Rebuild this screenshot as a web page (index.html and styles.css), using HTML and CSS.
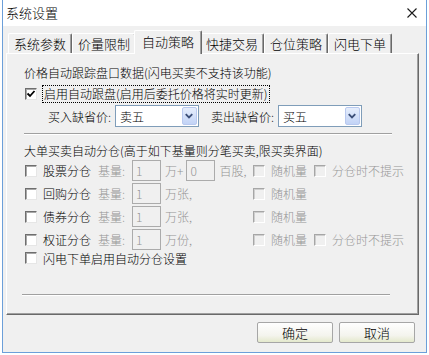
FILE: index.html
```html
<!DOCTYPE html>
<html lang="zh-CN">
<head>
    <meta charset="UTF-8">
    <title>系统设置</title>
    <link rel="stylesheet" href="styles.css">
</head>
<body>
    <div class="window">
        <div class="titlebar">
            <span class="title">系统设置</span>
            <svg class="close" width="10" height="10" viewBox="0 0 10 10">
                <path d="M0.5 0.5 L9.5 9.5 M9.5 0.5 L0.5 9.5" stroke="#1a1a1a" stroke-width="1.1" fill="none"/>
            </svg>
        </div>
        <div class="client">
            <div class="tabs">
                <div class="tab">系统参数</div>
                <div class="tab">价量限制</div>
                <div class="tab active">自动策略</div>
                <div class="tab">快捷交易</div>
                <div class="tab">仓位策略</div>
                <div class="tab">闪电下单</div>
            </div>
            <div class="panel">
                <div class="head">价格自动跟踪盘口数据(闪电买卖不支持该功能)</div>
                <div class="check-row">
                    <span class="cb">
                        <svg width="10" height="10" viewBox="0 0 10 10"><path d="M1.5 4.5 L4 7 L8.5 2" stroke="#000" stroke-width="1.8" fill="none"/></svg>
                    </span>
                    <span class="focus">启用自动跟盘(启用后委托价格将实时更新)</span>
                </div>
                <div class="price-row">
                    <span class="price-label">买入缺省价:</span>
                    <div class="combo">
                        <span class="combo-text">卖五</span>
                        <span class="combo-btn"><svg width="15" height="18" viewBox="0 0 15 18"><path d="M4 7 L7.5 10.5 L11 7" stroke="#3c4f78" stroke-width="2" fill="none"/></svg></span>
                    </div>
                    <span class="price-label sell">卖出缺省价:</span>
                    <div class="combo">
                        <span class="combo-text">买五</span>
                        <span class="combo-btn"><svg width="15" height="18" viewBox="0 0 15 18"><path d="M4 7 L7.5 10.5 L11 7" stroke="#3c4f78" stroke-width="2" fill="none"/></svg></span>
                    </div>
                </div>
                <div class="sep sep-top"></div>
                <div class="head head2">大单买卖自动分仓(高于如下基量则分笔买卖,限买卖界面)</div>

                <div class="split-row">
                    <span class="cb"></span><span class="split-name">股票分仓</span>
                    <span class="dim base">基量:</span><span class="field">1</span>
                    <span class="unit"><span class="dim">万+</span><span class="field mid">0</span><span class="dim">百股,</span></span>
                    <span class="cb dis"></span><span class="dim rnd">随机量</span>
                    <span class="cb dis"></span><span class="dim">分仓时不提示</span>
                </div>
                <div class="split-row">
                    <span class="cb"></span><span class="split-name">回购分仓</span>
                    <span class="dim base">基量:</span><span class="field">1</span>
                    <span class="unit"><span class="dim">万张,</span></span>
                    <span class="cb dis"></span><span class="dim rnd">随机量</span>
                </div>
                <div class="split-row">
                    <span class="cb"></span><span class="split-name">债券分仓</span>
                    <span class="dim base">基量:</span><span class="field">1</span>
                    <span class="unit"><span class="dim">万张,</span></span>
                    <span class="cb dis"></span><span class="dim rnd">随机量</span>
                </div>
                <div class="split-row">
                    <span class="cb"></span><span class="split-name">权证分仓</span>
                    <span class="dim base">基量:</span><span class="field">1</span>
                    <span class="unit"><span class="dim">万份,</span></span>
                    <span class="cb dis"></span><span class="dim rnd">随机量</span>
                    <span class="cb dis"></span><span class="dim">分仓时不提示</span>
                </div>
                <div class="split-row last">
                    <span class="cb"></span><span class="split-name">闪电下单启用自动分仓设置</span>
                </div>
                <div class="sep sep-bottom"></div>
            </div>
            <div class="buttons">
                <button type="button">确定</button>
                <button type="button">取消</button>
            </div>
        </div>
    </div>
</body>
</html>
```

FILE: styles.css
```css
/* Fenêtre de dialogue */
body {
    margin: 0;
    background-color: #ffffff;
    font-family: "Noto Sans CJK SC", sans-serif;
    font-size: 12px;
    font-weight: 300;
    color: #000;
}

.window {
    margin-left: 2px;
    width: 425px;
    height: 353px;
    box-sizing: border-box;
    border: 1px solid #6c9fd9;
    border-top: none;
    display: flex;
    flex-direction: column;
}

.titlebar {
    height: 26px;
    flex: none;
    background-color: #ffffff;
    display: flex;
    align-items: center;
    justify-content: space-between;
    padding: 0 9px 0 3px;
}

.title {
    font-size: 13px;
    line-height: 16px;
}

.client {
    flex: 1;
    background-color: #f0f0f0;
    padding: 5px 7px 0 3px;
}

/* Onglets */
.tabs {
    display: flex;
    align-items: flex-end;
    height: 22px;
    padding-left: 2px;
}

.tab {
    width: 64px;
    height: 20px;
    box-sizing: border-box;
    border-top: 1px solid #ffffff;
    border-left: 1px solid #ffffff;
    border-right: 1px solid #696969;
    box-shadow: inset -1px 0 0 #a0a0a0;
    border-radius: 2px 2px 0 0;
    font-size: 13px;
    line-height: 19px;
    text-align: center;
}

.tab.active {
    width: 68px;
    height: 24px;
    margin: 0 -2px -1px;
    line-height: 21px;
    background-color: #f0f0f0;
    position: relative;
    z-index: 1;
}

.panel {
    height: 262px;
    box-sizing: border-box;
    border-top: 1px solid #ffffff;
    border-left: 1px solid #ffffff;
    border-right: 1px solid #696969;
    border-bottom: 1px solid #696969;
    box-shadow: inset -1px -1px 0 #a0a0a0;
    padding-left: 17px;
}

.head {
    margin-top: 9px;
    height: 20px;
    line-height: 20px;
}

.head2 {
    margin-top: 6px;
}

.check-row {
    margin-top: 1px;
    height: 20px;
    display: flex;
    align-items: center;
}

.focus {
    margin-left: 5px;
    padding: 0 1px;
    line-height: 16px;
    border: 1px dotted #000;
}

/* Cases à cocher */
.cb {
    width: 12px;
    height: 12px;
    box-sizing: border-box;
    flex: none;
    margin-left: 1px;
    background-color: #ffffff;
    border: 1px solid;
    border-color: #6e6e6e #e6e6e6 #e6e6e6 #6e6e6e;
    box-shadow: inset 1px 1px 0 #a8a8a8;
    display: flex;
    align-items: center;
    justify-content: center;
}

.cb.dis {
    margin-left: 0;
    background-color: #f0f0f0;
    border-color: #a6a6a6 #ffffff #ffffff #a6a6a6;
    box-shadow: inset 1px 1px 0 #cfcfcf;
}

/* Listes déroulantes */
.price-row {
    margin-top: 1px;
    height: 22px;
    display: flex;
    align-items: center;
}

.price-label {
    width: 67px;
    margin-left: 24px;
}

.price-label.sell {
    margin-left: 12px;
}

.combo {
    width: 84px;
    height: 22px;
    box-sizing: border-box;
    border: 1px solid #7f9db9;
    background-color: #ffffff;
    display: flex;
    align-items: center;
    justify-content: space-between;
    padding: 0 1px 0 4px;
}

.combo-text {
    font-size: 12px;
}

.combo-btn {
    width: 15px;
    height: 18px;
    box-sizing: border-box;
    border: 1px solid #b9c9ef;
    border-radius: 2px;
    background: linear-gradient(#e6eefc, #c2d3f6);
    display: flex;
}

.combo-btn svg {
    margin-left: -1px;
    margin-top: -1px;
}

.sep {
    height: 1px;
    background-color: #a0a0a0;
    border-bottom: 1px solid #ffffff;
}

.sep-top {
    margin-top: 6px;
    width: 368px;
}

.sep-bottom {
    margin-top: 29px;
    margin-left: -2px;
    width: 368px;
}

/* Lignes de répartition */
.split-row {
    height: 23px;
    display: flex;
    align-items: center;
    white-space: nowrap;
}

.head2 + .split-row {
    margin-top: -2px;
}

.split-row.last {
    height: 14px;
}

.split-name {
    width: 55px;
    margin-left: 6px;
}

.split-row.last .split-name {
    width: auto;
}

.dim {
    color: #959595;
}

.base {
    width: 34px;
}

.field {
    width: 29px;
    height: 21px;
    box-sizing: border-box;
    border: 1px solid #ababab;
    background-color: #f0f0f0;
    color: #939393;
    padding-left: 3px;
    line-height: 19px;
    flex: none;
}

.field.mid {
    margin: 0 4px 0 3px;
}

.unit {
    width: 92px;
    padding-left: 4px;
    box-sizing: border-box;
    display: flex;
    align-items: center;
}

.rnd {
    width: 43px;
    margin-left: 6px;
}

.rnd + .cb + .dim {
    margin-left: 5px;
}

.cb.dis + .dim {
    margin-left: 6px;
}

/* Boutons */
.buttons {
    margin-top: 7px;
    display: flex;
    justify-content: flex-end;
    gap: 6px;
    padding-right: 4px;
}

button {
    width: 76px;
    height: 21px;
    padding: 0;
    border: 1px solid #a6a6a6;
    border-radius: 2px;
    background: linear-gradient(#fefefe, #f4f4ee 65%, #e4e9cc);
    font-family: "Noto Sans CJK SC", sans-serif;
    font-size: 13px;
    font-weight: 300;
    line-height: 19px;
    color: #000;
}
```
